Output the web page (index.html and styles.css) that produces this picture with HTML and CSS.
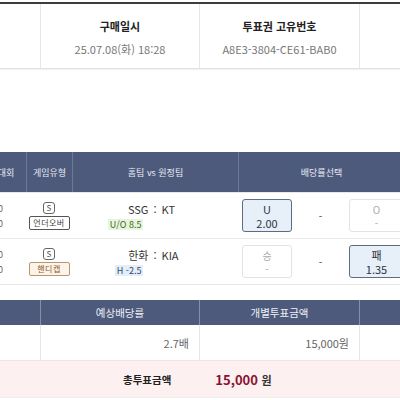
FILE: index.html
```html
<!DOCTYPE html>
<html lang="ko">
<head>
  <meta charset="UTF-8" />
  <meta name="viewport" content="width=device-width, initial-scale=1" />
  <title>투표권 상세</title>
  <link rel="stylesheet" href="styles.css">
</head>
<body>
  <main class="page">
    <!-- 구매 정보 -->
    <section class="info-table">
      <div class="info-cell"></div>
      <div class="info-cell">
        <div class="info-title">구매일시</div>
        <div class="info-value">25.07.08(화) 18:28</div>
      </div>
      <div class="info-cell">
        <div class="info-title">투표권 고유번호</div>
        <div class="info-value">A8E3-3804-CE61-BAB0</div>
      </div>
      <div class="info-cell"></div>
    </section>

    <!-- 경기 목록 -->
    <section class="game-table">
      <div class="game-row head">
        <div class="h-cell">대회</div>
        <div class="h-cell">게임유형</div>
        <div class="h-cell">홈팀 vs 원정팀</div>
        <div class="h-cell">배당률선택</div>
      </div>

      <div class="game-row">
        <div class="c-league"><span>0</span><span>0</span></div>
        <div class="c-type">
          <span class="s-icon">S</span>
          <span class="type-badge">언더오버</span>
        </div>
        <div class="c-match">
          <span class="home">SSG</span><span class="colon">:</span><span class="away">KT</span>
          <span class="line-badge uo">U/O 8.5</span>
        </div>
        <div class="c-odds">
          <div class="odd selected"><span>U</span><span>2.00</span></div>
          <div class="draw">-</div>
          <div class="odd"><span>O</span><span>-</span></div>
        </div>
      </div>

      <div class="game-row">
        <div class="c-league"><span>0</span><span>0</span></div>
        <div class="c-type">
          <span class="s-icon">S</span>
          <span class="type-badge handi">핸디캡</span>
        </div>
        <div class="c-match">
          <span class="home">한화</span><span class="colon">:</span><span class="away">KIA</span>
          <span class="line-badge hd">H -2.5</span>
        </div>
        <div class="c-odds">
          <div class="odd"><span>승</span><span>-</span></div>
          <div class="draw">-</div>
          <div class="odd selected"><span>패</span><span>1.35</span></div>
        </div>
      </div>
    </section>

    <!-- 합계 -->
    <section class="sum-table">
      <div class="sum-row head">
        <div></div>
        <div>예상배당률</div>
        <div>개별투표금액</div>
        <div></div>
      </div>
      <div class="sum-row body">
        <div></div>
        <div class="num">2.7배</div>
        <div class="num">15,000원</div>
        <div></div>
      </div>
      <div class="total-row">
        <span class="total-label">총투표금액</span>
        <span class="total-value">15,000 <small>원</small></span>
      </div>
    </section>
  </main>
</body>
</html>
```

FILE: styles.css
```css
* {
  box-sizing: border-box;
  margin: 0;
  padding: 0;
}
body {
  font-family: "Noto Sans CJK KR", "Noto Sans", sans-serif;
  background: #fff;
  color: #333;
  overflow: hidden;
}
.page {
  width: 400px;
  height: 400px;
  overflow: hidden;
  padding-top: 2px;
}

/* 구매 정보 */
.info-table {
  display: grid;
  grid-template-columns: 40px 159px 160px 1fr;
  border-top: 2px solid #3c3c3c;
  border-bottom: 1px solid #e2e2e2;
  box-shadow: 0 1px 1px #f0f0f0;
  height: 67px;
}
.info-cell {
  border-left: 1px solid #e6e6e6;
  text-align: center;
  padding-top: 14px;
}
.info-cell:first-child {
  border-left: none;
}
.info-title {
  font-size: 11px;
  font-weight: 700;
  color: #222;
  line-height: 16px;
}
.info-value {
  font-size: 11px;
  color: #777;
  margin-top: 7px;
  line-height: 16px;
}

/* 경기 목록 */
.game-table {
  margin-top: 83px;
  width: 418px;
  margin-left: -14px;
  border-bottom: 1px solid #e6e6e6;
}
.game-row {
  display: grid;
  grid-template-columns: 40px 46px 166px 166px;
  border-top: 1px solid #e8e8e8;
  height: 46px;
}
.game-row.head {
  background-color: #4d5a7c;
  height: 40px;
  border-top: none;
}
.h-cell {
  display: flex;
  align-items: center;
  justify-content: center;
  border-left: 1px solid #6d7995;
  color: #e8ebf2;
  font-size: 9px;
}
.h-cell:first-child {
  border-left: none;
}
.c-league {
  display: flex;
  flex-direction: column;
  align-items: flex-end;
  justify-content: center;
  padding-right: 23px;
  font-size: 9px;
  color: #666;
  gap: 2px;
}
.c-type {
  display: flex;
  flex-direction: column;
  align-items: center;
  justify-content: center;
  gap: 2px;
}
.s-icon {
  width: 12px;
  height: 12px;
  border: 1px solid #666;
  border-radius: 3px;
  font-size: 8px;
  line-height: 10px;
  text-align: center;
  color: #555;
}
.type-badge {
  width: 41px;
  height: 14px;
  border: 1px solid #555;
  border-radius: 2px;
  font-size: 8px;
  line-height: 12px;
  text-align: center;
  color: #444;
  letter-spacing: 0.5px;
}
.type-badge.handi {
  border-color: #b99671;
  background-color: #fcf3e9;
  color: #8b5b2c;
}
.c-match {
  display: grid;
  grid-template-columns: 1fr auto 1fr;
  align-content: center;
  row-gap: 2px;
  font-size: 11px;
  color: #333;
  line-height: 15px;
}
.home {
  text-align: right;
}
.colon {
  padding: 0 5px;
}
.away {
  text-align: left;
}
.line-badge {
  grid-column: 1;
  justify-self: end;
  margin-right: 5px;
  font-size: 9px;
  line-height: 11px;
  padding: 0 2px;
}
.line-badge.uo {
  background-color: #e8f5de;
  color: #3c6a22;
}
.line-badge.hd {
  background-color: #e4eef9;
  color: #2c4a6e;
}
.c-odds {
  display: grid;
  grid-template-columns: 50px 57px 55px;
  align-items: center;
  padding-left: 4px;
}
.odd {
  height: 33px;
  border: 1px solid #e3e3e3;
  border-radius: 3px;
  display: flex;
  flex-direction: column;
  align-items: center;
  justify-content: center;
  font-size: 10px;
  line-height: 13px;
  color: #aaa;
}
.odd.selected {
  border-color: #5d6c80;
  background-color: #e7eff9;
  color: #2b3340;
  font-size: 11px;
  line-height: 14px;
}
.draw {
  text-align: center;
  font-size: 10px;
  color: #444;
}

/* 합계 */
.sum-table {
  margin-top: 15px;
}
.sum-row {
  display: grid;
  grid-template-columns: 40px 159px 160px 1fr;
}
.sum-row > div {
  border-left: 1px solid #e6e6e6;
}
.sum-row > div:first-child {
  border-left: none;
}
.sum-row.head {
  background-color: #4d5a7c;
  color: #eef0f5;
  height: 25px;
  font-size: 10.5px;
}
.sum-row.head > div {
  display: flex;
  align-items: center;
  justify-content: center;
  border-left-color: #8390ab;
}
.sum-row.body {
  height: 35px;
  font-size: 11px;
  color: #666;
}
.sum-row .num {
  display: flex;
  align-items: center;
  justify-content: flex-end;
  padding-right: 10px;
}
.total-row {
  height: 38px;
  background-color: #fdf0f0;
  border-top: 1px solid #f3e3e3;
  border-bottom: 1px solid #eee;
  display: flex;
  align-items: center;
  padding-left: 123px;
  gap: 44px;
}
.total-label {
  font-size: 10.5px;
  font-weight: 700;
  color: #222;
}
.total-value {
  font-size: 13px;
  font-weight: 700;
  color: #8b1230;
}
.total-value small {
  font-size: 11px;
  color: #333;
}
```
